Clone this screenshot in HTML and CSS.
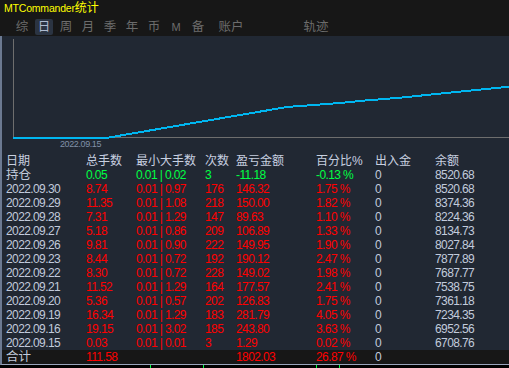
FILE: index.html
```
<!DOCTYPE html>
<html>
<head>
<meta charset="utf-8">
<link rel="stylesheet" href="styles.css">
</head>
<body>
<div class="app">
  <div class="top">
    <div class="title">MTCommander<span class="cjk">统计</span></div>
    <div class="tabs">
      <div class="tab"><span>综</span></div>
      <div class="tab sel"><span>日</span></div>
      <div class="tab"><span>周</span></div>
      <div class="tab"><span>月</span></div>
      <div class="tab"><span>季</span></div>
      <div class="tab"><span>年</span></div>
      <div class="tab"><span>币</span></div>
      <div class="tab latin"><span>M</span></div>
      <div class="tab"><span>备</span></div>
      <div class="tab wide"><span>账户</span></div>
      <div class="tab wide far"><span>轨迹</span></div>
    </div>
  </div>
  <div class="main">
    <svg class="chart" width="507" height="118" viewBox="0 0 507 118">
      <line x1="11.5" y1="3" x2="11.5" y2="101.5" stroke="#6e6e6e" stroke-width="1"/>
      <line x1="11" y1="101.5" x2="507" y2="101.5" stroke="#6e6e6e" stroke-width="1"/>
      <polyline points="11,102 104,102 168,91 238,79 285,71 338,67 361,64.7 398,61.7 451,56.3 507,50.7" fill="none" stroke="#00b6f0" stroke-width="2" shape-rendering="crispEdges"/>
      <text x="58" y="111" class="axis-label">2022.09.15</text>
    </svg>
    <div class="table">
      <div class="row head">
        <div>日期</div><div>总手数</div><div>最小大手数</div><div>次数</div><div>盈亏金额</div><div>百分比%</div><div>出入金</div><div>余额</div>
      </div>
      <div class="row">
        <div class="cjk-cell">持仓</div><div class="g">0.05</div><div class="g">0.01 | 0.02</div><div class="g">3</div><div class="g">-11.18</div><div class="g">-0.13 %</div><div>0</div><div>8520.68</div>
      </div>
      <div class="row"><div>2022.09.30</div><div class="r">8.74</div><div class="r">0.01 | 0.97</div><div class="r">176</div><div class="r">146.32</div><div class="r">1.75 %</div><div>0</div><div>8520.68</div></div>
      <div class="row"><div>2022.09.29</div><div class="r">11.35</div><div class="r">0.01 | 1.08</div><div class="r">218</div><div class="r">150.00</div><div class="r">1.82 %</div><div>0</div><div>8374.36</div></div>
      <div class="row"><div>2022.09.28</div><div class="r">7.31</div><div class="r">0.01 | 1.29</div><div class="r">147</div><div class="r">89.63</div><div class="r">1.10 %</div><div>0</div><div>8224.36</div></div>
      <div class="row"><div>2022.09.27</div><div class="r">5.18</div><div class="r">0.01 | 0.86</div><div class="r">209</div><div class="r">106.89</div><div class="r">1.33 %</div><div>0</div><div>8134.73</div></div>
      <div class="row"><div>2022.09.26</div><div class="r">9.81</div><div class="r">0.01 | 0.90</div><div class="r">222</div><div class="r">149.95</div><div class="r">1.90 %</div><div>0</div><div>8027.84</div></div>
      <div class="row"><div>2022.09.23</div><div class="r">8.44</div><div class="r">0.01 | 0.72</div><div class="r">192</div><div class="r">190.12</div><div class="r">2.47 %</div><div>0</div><div>7877.89</div></div>
      <div class="row"><div>2022.09.22</div><div class="r">8.30</div><div class="r">0.01 | 0.72</div><div class="r">228</div><div class="r">149.02</div><div class="r">1.98 %</div><div>0</div><div>7687.77</div></div>
      <div class="row"><div>2022.09.21</div><div class="r">11.52</div><div class="r">0.01 | 1.29</div><div class="r">164</div><div class="r">177.57</div><div class="r">2.41 %</div><div>0</div><div>7538.75</div></div>
      <div class="row"><div>2022.09.20</div><div class="r">5.36</div><div class="r">0.01 | 0.57</div><div class="r">202</div><div class="r">126.83</div><div class="r">1.75 %</div><div>0</div><div>7361.18</div></div>
      <div class="row"><div>2022.09.19</div><div class="r">16.34</div><div class="r">0.01 | 1.29</div><div class="r">183</div><div class="r">281.79</div><div class="r">4.05 %</div><div>0</div><div>7234.35</div></div>
      <div class="row"><div>2022.09.16</div><div class="r">19.15</div><div class="r">0.01 | 3.02</div><div class="r">185</div><div class="r">243.80</div><div class="r">3.63 %</div><div>0</div><div>6952.56</div></div>
      <div class="row"><div>2022.09.15</div><div class="r">0.03</div><div class="r">0.01 | 0.01</div><div class="r">3</div><div class="r">1.29</div><div class="r">0.02 %</div><div>0</div><div>6708.76</div></div>
      <div class="row total"><div class="cjk-cell">合计</div><div class="r">111.58</div><div></div><div></div><div class="r">1802.03</div><div class="r">26.87 %</div><div>0</div><div></div></div>
    </div>
  </div>
  <div class="foot">
    <i class="m1"></i><i class="m2"></i><i class="m3"></i><i class="m4"></i>
  </div>
</div>
</body>
</html>
```
FILE: styles.css
```
html, body {
  margin: 0;
  padding: 0;
  background: #000;
}
.app {
  width: 509px;
  height: 368px;
  overflow: hidden;
  background: #000;
  font-family: "Liberation Sans", "Noto Sans CJK SC", sans-serif;
}
.top {
  background: #171717;
  height: 36px;
}
.title {
  height: 17px;
  line-height: 17px;
  padding-left: 4px;
  color: #ffff00;
  font-size: 10.5px;
  letter-spacing: -0.2px;
  white-space: nowrap;
}
.title .cjk {
  font-size: 12px;
  letter-spacing: 0;
}
.tabs {
  display: flex;
  align-items: center;
  height: 19px;
  padding-left: 11px;
}
.tab {
  width: 22px;
  display: flex;
  justify-content: center;
  color: #6c6c6c;
  font-size: 12.5px;
}
.tab span {
  display: block;
  height: 16px;
  line-height: 16px;
  padding: 0 2.5px;
  border-radius: 2px;
}
.tab.sel span {
  background: #2b3442;
  color: #aebbd0;
}
.tab.latin {
  font-size: 11px;
}
.tab.wide {
  width: 44px;
}
.tab.far {
  margin-left: 41px;
}
.main {
  background: #212833;
  border-left: 2px solid #6c7a92;
  border-bottom: 1px solid #9aa4bc;
}
.chart {
  display: block;
}
.axis-label {
  font-family: "Liberation Sans", sans-serif;
  font-size: 9px;
  letter-spacing: -0.4px;
  fill: #8090a8;
}
.table {
  color: #c2cbdc;
}
.row {
  display: grid;
  grid-template-columns: 80px 50px 69px 31px 80px 59px 60px 1fr;
  padding-left: 4px;
  height: 14px;
  line-height: 14px;
  font-size: 12px;
  letter-spacing: -0.6px;
  white-space: nowrap;
}
.row.head {
  letter-spacing: 0;
  color: #c8d0e0;
}
.cjk-cell {
  letter-spacing: 0;
  font-size: 12.5px;
}
.g {
  color: #00ff44;
}
.r {
  color: #ff0000;
}
.row.total {
  background: #171717;
}
.foot {
  display: flex;
  height: 3px;
}
.foot i {
  display: block;
  width: 1px;
  height: 3px;
  background: #00ff44;
}
.foot .m1 { margin-left: 150px; }
.foot .m2 { margin-left: 52px; }
.foot .m3 { margin-left: 112px; }
.foot .m4 { margin-left: 22px; }
```
